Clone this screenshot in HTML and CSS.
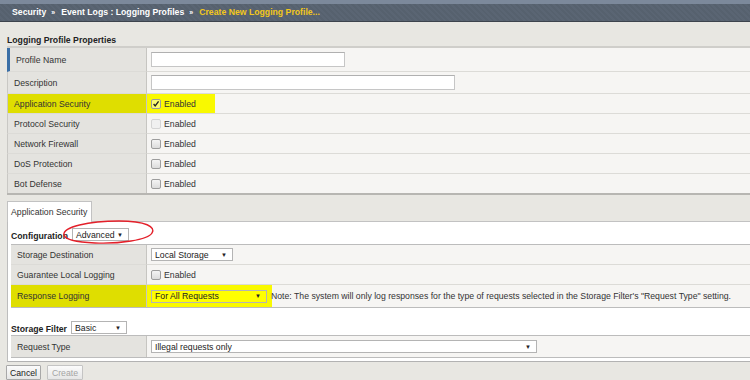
FILE: index.html
```html
<!DOCTYPE html>
<html lang="en">
<head>
  <meta charset="UTF-8" />
  <title>Create New Logging Profile</title>
  <link rel="stylesheet" href="styles.css">
</head>
<body>
  <div class="crumbs">
    <span>Security</span><span class="sep">»</span><span>Event Logs : Logging Profiles</span><span class="sep">»</span><span class="current">Create New Logging Profile...</span>
  </div>

  <h2 class="section">Logging Profile Properties</h2>

  <table class="form props">
    <tr class="r24">
      <td class="label first">Profile Name</td>
      <td class="value"><input type="text" class="txt w-name"></td>
    </tr>
    <tr class="r22">
      <td class="label">Description</td>
      <td class="value"><input type="text" class="txt w-desc"></td>
    </tr>
    <tr>
      <td class="label hl">Application Security</td>
      <td class="value hl-short"><span class="cb checked"><svg viewBox="0 0 9 9"><path d="M1.8 4.6 L3.6 6.6 L7.4 1.6" /></svg></span>Enabled</td>
    </tr>
    <tr>
      <td class="label">Protocol Security</td>
      <td class="value"><span class="cb off"></span>Enabled</td>
    </tr>
    <tr>
      <td class="label">Network Firewall</td>
      <td class="value"><span class="cb"></span>Enabled</td>
    </tr>
    <tr>
      <td class="label">DoS Protection</td>
      <td class="value"><span class="cb"></span>Enabled</td>
    </tr>
    <tr class="r19">
      <td class="label">Bot Defense</td>
      <td class="value"><span class="cb"></span>Enabled</td>
    </tr>
  </table>

  <div class="tabbar">
    <div class="tab">Application Security</div>
    <div class="tab-rest"></div>
  </div>

  <div class="panel">
    <svg class="circle" viewBox="0 0 96 30" width="96" height="30">
      <path d="M3 17 C 1 9, 28 3, 58 3 C 85 3, 95 9, 91 15 C 87 22, 58 26, 34 25 C 13 24, 4 21, 3 17 Z" />
    </svg>

    <div class="sub sub-config">
      <b>Configuration</b>
      <div class="select w-adv"><span>Advanced</span><span class="caret">▼</span></div>
    </div>

    <table class="form inner">
      <tr>
        <td class="label">Storage Destination</td>
        <td class="value"><div class="select w-local"><span>Local Storage</span><span class="caret">▼</span></div></td>
      </tr>
      <tr>
        <td class="label">Guarantee Local Logging</td>
        <td class="value"><span class="cb"></span>Enabled</td>
      </tr>
      <tr class="r22">
        <td class="label hl">Response Logging</td>
        <td class="value hl-long"><div class="select w-resp yellow"><span>For All Requests</span><span class="caret">▼</span></div><span class="note">Note: The system will only log responses for the type of requests selected in the Storage Filter's "Request Type" setting.</span></td>
      </tr>
    </table>

    <div class="sub sub-filter">
      <b>Storage Filter</b>
      <div class="select w-basic"><span>Basic</span><span class="caret">▼</span></div>
    </div>

    <table class="form inner">
      <tr class="r21">
        <td class="label">Request Type</td>
        <td class="value"><div class="select w-req"><span>Illegal requests only</span><span class="caret">▼</span></div></td>
      </tr>
    </table>
  </div>

  <div class="buttons">
    <button class="btn w-cancel">Cancel</button>
    <button class="btn w-create" disabled>Create</button>
  </div>
</body>
</html>
```

FILE: styles.css
```css
body {
  margin: 0;
  background: #e8e7e2;
  color: #333;
  font-family: "Liberation Sans", Arial, sans-serif;
  font-size: 8.7px;
}

/* breadcrumb bar */
.crumbs {
  height: 17px;
  line-height: 17px;
  padding-left: 12px;
  border-top: 4px solid #7c899b;
  border-bottom: 1px solid #3d444d;
  background: repeating-linear-gradient(45deg, #56616e 0 2px, #5a6573 2px 4px);
  color: #fff;
  font-weight: bold;
}
.crumbs .sep {
  font-size: 7px;
  margin: 0 6px 0 5px;
}
.crumbs .current {
  color: #f3c81c;
}

.section {
  margin: 0;
  padding: 12px 7px 0;
  height: 12px;
  line-height: 12px;
  font-size: 8.7px;
  color: #222;
}

/* form tables */
.form {
  border-spacing: 0;
  width: 100%;
}
.form td {
  box-sizing: border-box;
  height: 20px;
  padding: 0;
  border-bottom: 1px solid #dcdbd7;
  vertical-align: middle;
}
.form tr:last-child td {
  border-bottom: 0;
}
.form .r24 td { height: 24px; }
.form .r22 td { height: 22px; }
.form .r21 td { height: 21px; }
.form .r19 td { height: 19px; }

.form .label {
  width: 140px;
  padding-left: 6px;
  background: #e4e3df;
  border-right: 1px solid #c6c5c1;
  white-space: nowrap;
}
.form .value {
  padding-left: 4px;
  background: #f6f5f3;
  white-space: nowrap;
}

.props {
  margin-left: 7px;
  width: calc(100% - 7px);
  border-top: 2px solid #cfceca;
  border-bottom: 2px solid #b7b6b2;
}
.props .label {
  border-left: 1px solid #c9c8c4;
}
.props .label.first {
  border-left: 3px solid #3b6fa6;
  padding-left: 6px;
}

/* highlighter marks */
.form .label.hl {
  background: #dfde00;
}
.form .value.hl-short {
  background: linear-gradient(to right, #f9f900 68px, #f6f5f3 68px);
}
.form .value.hl-long {
  background: linear-gradient(to right, #f9f900 125px, #f6f5f3 125px);
}

.txt {
  box-sizing: border-box;
  height: 15px;
  margin: 0;
  padding: 0 3px;
  border: 1px solid #c6c6c6;
  border-top-color: #b0b0b0;
  background: #fff;
  vertical-align: middle;
}
.w-name { width: 194px; }
.w-desc { width: 304px; }

.cb {
  display: inline-block;
  box-sizing: border-box;
  width: 10px;
  height: 10px;
  margin-right: 3px;
  border: 1px solid #9d9d9d;
  border-radius: 2px;
  background: linear-gradient(#f4f4f4, #dcdcdc);
  vertical-align: -2px;
}
.cb.off {
  border-color: #d4d4d4;
  background: #f0f0f0;
}
.cb.checked {
  background: rgba(255, 255, 255, 0.45);
}
.cb svg {
  display: block;
  width: 8px;
  height: 8px;
}
.cb svg path {
  fill: none;
  stroke: #222;
  stroke-width: 1.6;
}

.select {
  display: inline-flex;
  justify-content: space-between;
  align-items: center;
  box-sizing: border-box;
  height: 13px;
  padding: 0 5px 0 3px;
  border: 1px solid #b4b4b4;
  background: #fff;
  color: #222;
  vertical-align: middle;
}
.select .caret {
  font-size: 6px;
}
.select.yellow {
  background: #ffff00;
}
.w-adv { width: 57px; }
.w-local { width: 82px; }
.w-resp { width: 116px; }
.w-basic { width: 56px; }
.w-req { width: 386px; }

.note {
  margin-left: 4px;
  vertical-align: middle;
}

/* tab + panel */
.tabbar {
  display: flex;
  margin: 6px 0 0 7px;
}
.tab {
  box-sizing: border-box;
  width: 85px;
  height: 21px;
  line-height: 20px;
  padding-left: 3px;
  border: 1px solid #c2c2c2;
  border-bottom: 0;
  background: #fff;
}
.tab-rest {
  flex: 1;
  border-bottom: 1px solid #c2c2c2;
}

.panel {
  position: relative;
  margin-left: 7px;
  padding: 0 0 3px 3px;
  border-left: 1px solid #bdbdbd;
  border-bottom: 1px solid #b2b2b2;
  background: #fff;
}
.panel .inner {
  border-top: 1px solid #bcbcbc;
  border-bottom: 1px solid #bcbcbc;
}
.panel .inner .label {
  width: 136px;
}

.sub {
  display: flex;
  align-items: flex-end;
  box-sizing: border-box;
}
.sub b {
  color: #222;
  margin-right: 4px;
  line-height: 10px;
}
.sub-config {
  height: 22px;
  padding-bottom: 3px;
}
.sub-filter {
  height: 27px;
  padding-bottom: 1px;
}

.circle {
  position: absolute;
  left: 53px;
  top: -4px;
}
.circle path {
  fill: none;
  stroke: #e3202a;
  stroke-width: 1.4;
}

.buttons {
  display: flex;
  gap: 6px;
  padding: 3px 0 0 6px;
}
.btn {
  box-sizing: border-box;
  height: 15px;
  padding: 0;
  border: 1px solid #a8a8a8;
  border-radius: 1px;
  background: linear-gradient(#fbfbfb, #e6e6e6);
  color: #222;
  font-family: "Liberation Sans", Arial, sans-serif;
  font-size: 8.7px;
}
.btn:disabled {
  color: #a4a4a4;
  border-color: #c4c4c4;
}
.w-cancel { width: 35px; }
.w-create { width: 36px; }
```
